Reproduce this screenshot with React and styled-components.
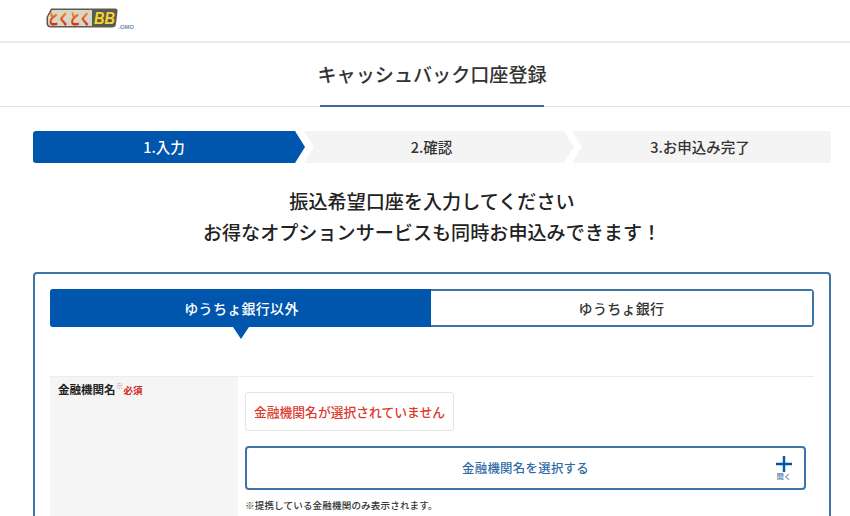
import React from 'react';
import styled, { createGlobalStyle } from 'styled-components';

const GlobalStyle = createGlobalStyle`
  html, body {
    margin: 0;
    padding: 0;
    height: 516px;
    overflow: hidden;
    background: #fff;
    font-family: "Noto Sans CJK JP", "Noto Sans", sans-serif;
    color: #222;
  }
`;

const BLUE = '#0056ad';
const FRAME = '#3f74a8';

const Logo = () => (
  <LogoBox>
    <svg width="90" height="26" viewBox="0 0 90 26">
      <defs>
        <linearGradient id="red" x1="0" y1="0" x2="0" y2="1">
          <stop offset="0.1" stopColor="#f0b828" />
          <stop offset="0.55" stopColor="#e5541a" />
          <stop offset="1" stopColor="#c61d14" />
        </linearGradient>
      </defs>
      <path d="M6 4.5 H70 Q73 4.5 72.5 7.5 L71 20 Q70.5 23.5 67 23.5 H6 Q2 23.5 1.5 20 L1.5 13 Z" fill="#5a5a52" />
      <path d="M7 6 H47 V22 H6 Q3 22 3 19 V13 Z" fill="#d9d6c8" />
      <text x="3" y="20" fontFamily="Noto Sans CJK JP, sans-serif" fontWeight="900" fontSize="15" fill="url(#red)" textLength="43" lengthAdjust="spacingAndGlyphs">とくとく</text>
      <text x="49" y="20" fontFamily="Liberation Sans, sans-serif" fontWeight="700" fontSize="16" fontStyle="italic" fill="#f5d42c" textLength="21" lengthAdjust="spacingAndGlyphs">BB</text>
      <text x="73" y="24.5" fontFamily="Liberation Sans, sans-serif" fontWeight="700" fontSize="6" fill="#6f8fb0">.GMO</text>
    </svg>
  </LogoBox>
);

const App = () => {
  return (
    <>
      <GlobalStyle />
      <Page>
        <Header>
          <Logo />
        </Header>
        <TitleBar>
          <Title>キャッシュバック口座登録</Title>
        </TitleBar>
        <Steps>
          <Step $active $first>1.入力</Step>
          <Step>2.確認</Step>
          <Step $last>3.お申込み完了</Step>
        </Steps>
        <Lead>
          振込希望口座を入力してください<br />
          お得なオプションサービスも同時お申込みできます！
        </Lead>
        <Panel>
          <Tabs>
            <Tab $active>ゆうちょ銀行以外</Tab>
            <Tab>ゆうちょ銀行</Tab>
          </Tabs>
          <FormRow>
            <LabelCell>
              金融機関名<Mark>※</Mark><Required>必須</Required>
            </LabelCell>
            <FieldCell>
              <ErrorBox>金融機関名が選択されていません</ErrorBox>
              <SelectButton>
                金融機関名を選択する
                <OpenIcon>
                  <svg width="16" height="16" viewBox="0 0 16 16">
                    <path d="M8 0 V16 M0 8 H16" stroke={BLUE} strokeWidth="2.4" />
                  </svg>
                  <OpenText>開く</OpenText>
                </OpenIcon>
              </SelectButton>
              <Note>※提携している金融機関のみ表示されます。</Note>
            </FieldCell>
          </FormRow>
        </Panel>
      </Page>
    </>
  );
};

const Page = styled.div`
  width: 850px;
`;

const Header = styled.header`
  height: 41px;
  border-bottom: 2px solid #e9e9e9;
  padding-left: 45px;
`;

const LogoBox = styled.div`
  padding-top: 4px;
  line-height: 0;
`;

const TitleBar = styled.div`
  height: 63px;
  border-bottom: 1px solid #e2e2e2;
  display: flex;
  justify-content: center;
  padding-left: 14px;
`;

const Title = styled.h1`
  margin: 0;
  width: 224px;
  height: 64px;
  box-sizing: border-box;
  border-bottom: 2px solid #3d68a0;
  font-size: 19.1px;
  font-weight: 500;
  line-height: 63px;
  text-indent: -2.5px;
  text-align: center;
  white-space: nowrap;
  color: #333;
`;

const Steps = styled.div`
  display: flex;
  margin: 24px 19px 0 33px;
  height: 32px;
`;

const Step = styled.div`
  flex: ${p => (p.$first ? '0 0 272px' : p.$last ? '1 1 0' : '0 0 270px')};
  margin-left: ${p => (p.$first ? '0' : p.$last ? '-2px' : '-1px')};
  padding: 0 ${p => (p.$first ? '10px' : p.$last ? '3px' : '15px')} 2px 0;
  box-sizing: border-box;
  display: flex;
  align-items: center;
  justify-content: center;
  font-size: 14.5px;
  font-weight: 500;
  background: ${p => (p.$active ? BLUE : '#f4f4f4')};
  color: ${p => (p.$active ? '#fff' : '#333')};
  border-radius: ${p => (p.$first ? '3px 0 0 3px' : p.$last ? '0 3px 3px 0' : '0')};
  clip-path: ${p =>
    p.$first
      ? 'polygon(0 0, calc(100% - 10px) 0, 100% 50%, calc(100% - 10px) 100%, 0 100%)'
      : p.$last
        ? 'polygon(0 0, 100% 0, 100% 100%, 0 100%, 10px 50%)'
        : 'polygon(0 0, calc(100% - 10px) 0, 100% 50%, calc(100% - 10px) 100%, 0 100%, 10px 50%)'};
`;

const Lead = styled.p`
  margin: 23px 19px 0 33px;
  text-align: center;
  font-size: 19.1px;
  font-weight: 500;
  line-height: 31px;
  color: #222;
`;

const Panel = styled.section`
  margin: 24px 19px 0 33px;
  height: 300px;
  box-sizing: border-box;
  border: 2px solid ${FRAME};
  border-radius: 4px;
  padding: 15px;
`;

const Tabs = styled.div`
  display: flex;
  height: 38px;
  box-sizing: border-box;
  border: 2px solid ${FRAME};
  border-radius: 4px;
  margin-bottom: 49px;
`;

const Tab = styled.div`
  position: relative;
  flex: ${p => (p.$active ? '0 0 381px' : '1 1 0')};
  padding-left: ${p => (p.$active ? '2px' : '0')};
  box-sizing: border-box;
  display: flex;
  align-items: center;
  justify-content: center;
  font-size: 14px;
  font-weight: 500;
  letter-spacing: 0.3px;
  background: ${p => (p.$active ? BLUE : '#fff')};
  color: ${p => (p.$active ? '#fff' : '#333')};
  margin: ${p => (p.$active ? '-2px 0 -2px -2px' : '0')};
  border-radius: ${p => (p.$active ? '3px 0 0 3px' : '0')};

  ${p =>
    p.$active &&
    `&::after {
      content: '';
      position: absolute;
      left: 50%;
      bottom: -12px;
      margin-left: -8px;
      border-left: 8px solid transparent;
      border-right: 8px solid transparent;
      border-top: 12px solid ${BLUE};
    }`}
`;

const FormRow = styled.div`
  display: flex;
  border-top: 1px solid #ececec;
  min-height: 140px;
`;

const LabelCell = styled.div`
  flex: 0 0 188px;
  box-sizing: border-box;
  background: #f5f5f5;
  padding: 3px 8px;
  font-size: 11.5px;
  font-weight: 700;
  line-height: 18px;
  color: #222;
`;

const Mark = styled.sup`
  font-size: 8px;
  font-weight: 400;
  color: #d98a8a;
  line-height: 0;
`;

const Required = styled.span`
  font-size: 9.5px;
  color: #d4281e;
  font-weight: 700;
`;

const FieldCell = styled.div`
  flex: 1;
  padding: 15px 8px 0 7px;
`;

const ErrorBox = styled.div`
  display: inline-block;
  box-sizing: border-box;
  width: 209px;
  height: 39px;
  border: 1px solid #e4e4e4;
  border-radius: 3px;
  text-align: center;
  font-size: 12.8px;
  font-weight: 500;
  line-height: 37px;
  white-space: nowrap;
  color: #dc3a2c;
  vertical-align: top;
`;

const SelectButton = styled.div`
  position: relative;
  box-sizing: border-box;
  margin-top: 15px;
  height: 44px;
  border: 2px solid ${FRAME};
  border-radius: 4px;
  display: flex;
  align-items: center;
  justify-content: center;
  font-size: 12.4px;
  font-weight: 500;
  letter-spacing: 0.3px;
  color: #2f6aa6;
`;

const OpenIcon = styled.div`
  position: absolute;
  right: 12px;
  top: 8px;
  display: flex;
  flex-direction: column;
  align-items: center;
  line-height: 0;
`;

const OpenText = styled.span`
  font-size: 7px;
  line-height: 9px;
  color: #3f74a8;
`;

const Note = styled.p`
  margin: 8px 0 0;
  font-size: 9.5px;
  font-weight: 500;
  line-height: 14px;
  letter-spacing: 0.2px;
  color: #333;
`;

export default App;
